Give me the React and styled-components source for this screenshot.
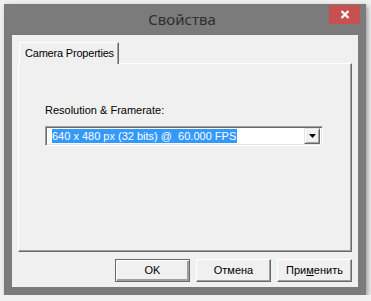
import styled, { createGlobalStyle } from 'styled-components'

const GlobalStyle = createGlobalStyle`
  html, body {
    margin: 0;
    padding: 0;
    background: #f0f0f0;
  }
  body {
    font-family: 'Liberation Sans', Arial, sans-serif;
    font-size: 11px;
    color: #000;
  }
`

const Window = styled('div')`
  width: 362px;
  height: 291px;
  margin: 4px 0 0 4px;
  background: #7b7b7b;
  display: flex;
  flex-direction: column;
  box-shadow: 2px 2px 5px rgba(0, 0, 0, 0.35);
`

const TitleBar = styled('div')`
  height: 31px;
  display: grid;
  grid-template-columns: 1fr auto 1fr;
  align-items: center;
  padding-right: 6px;
`

const Title = styled('div')`
  grid-column: 2;
  font-family: 'Noto Sans', 'Open Sans', sans-serif;
  font-size: 15px;
  color: #2e2e2e;
  margin-top: -1px;
`

const CloseButton = styled('div')`
  grid-column: 3;
  justify-self: end;
  align-self: start;
  margin-top: 1px;
  width: 31px;
  height: 19px;
  background: #c75050;
  display: flex;
  align-items: center;
  justify-content: center;
`

const Client = styled('div')`
  flex: 1;
  margin: 0 8px 8px;
  background: #f0f0f0;
  padding: 7px 6px 5px;
  display: flex;
  flex-direction: column;
`

const TabStrip = styled('div')`
  display: flex;
  padding-left: 1px;
  position: relative;
  z-index: 1;
  margin-bottom: -1px;
`

const Tab = styled('div')`
  width: 100px;
  height: 22px;
  box-sizing: border-box;
  background: #f0f0f0;
  border-top: 1px solid #fff;
  border-left: 1px solid #fff;
  border-right: 1px solid #696969;
  box-shadow: inset -1px 0 #a0a0a0;
  padding: 4px 0 0 5px;
  letter-spacing: -0.2px;
  white-space: nowrap;
`

const Panel = styled('div')`
  height: 189px;
  box-sizing: border-box;
  background: #f0f0f0;
  border-top: 1px solid #fff;
  border-left: 1px solid #fff;
  border-right: 1px solid #696969;
  border-bottom: 1px solid #696969;
  box-shadow: inset -1px -1px #a0a0a0;
  padding: 40px 0 0 26px;
  display: flex;
  flex-direction: column;
  gap: 9px;
`

const Label = styled('div')`
  line-height: 13px;
`

const Combo = styled('div')`
  width: 278px;
  height: 20px;
  box-sizing: border-box;
  background: #fff;
  border-top: 1px solid #a0a0a0;
  border-left: 1px solid #a0a0a0;
  border-right: 1px solid #fff;
  border-bottom: 1px solid #fff;
  box-shadow: inset 1px 1px #696969, inset -1px -1px #e3e3e3;
  padding: 2px 2px 2px 6px;
  display: flex;
  align-items: center;
`

const ComboText = styled('div')`
  flex: 1;
  white-space: pre;
  line-height: 14px;
`

const Selected = styled('span')`
  display: inline-block;
  background: #3399ff;
  color: #fff;
  padding-right: 1px;
`

const DropButton = styled('div')`
  width: 16px;
  height: 16px;
  box-sizing: border-box;
  background: #f0f0f0;
  border-top: 1px solid #e3e3e3;
  border-left: 1px solid #e3e3e3;
  border-right: 1px solid #696969;
  border-bottom: 1px solid #696969;
  box-shadow: inset 1px 1px #fff, inset -1px -1px #a0a0a0;
  display: flex;
  align-items: center;
  justify-content: center;
`

const ButtonRow = styled('div')`
  display: flex;
  justify-content: flex-end;
  gap: 6px;
  margin-top: 7px;
`

const Button = styled('div')`
  width: 75px;
  height: 23px;
  box-sizing: border-box;
  background: #f0f0f0;
  border: 1px solid;
  border-color: ${(p) => (p.$default ? '#696969' : '#fff #696969 #696969 #fff')};
  box-shadow: ${(p) =>
    p.$default
      ? 'inset 1px 1px #fff, inset -1px -1px #a0a0a0, inset -2px -2px #a0a0a0'
      : 'inset -1px -1px #a0a0a0'};
  display: flex;
  align-items: center;
  justify-content: center;
  padding-bottom: 1px;
  color: #000;
`

const App = () => {
  return (
    <>
      <GlobalStyle />
      <Window>
        <TitleBar>
          <Title>Свойства</Title>
          <CloseButton>
            <svg width="10" height="9" viewBox="0 0 10 9">
              <path d="M1.5 1 L8.5 8 M8.5 1 L1.5 8" stroke="#fff" strokeWidth="2.2" />
            </svg>
          </CloseButton>
        </TitleBar>
        <Client>
          <TabStrip>
            <Tab>Camera Properties</Tab>
          </TabStrip>
          <Panel>
            <Label>Resolution &amp; Framerate:</Label>
            <Combo>
              <ComboText>
                <Selected>{'640 x 480 px (32 bits) @  60.000 FPS'}</Selected>
              </ComboText>
              <DropButton>
                <svg width="7" height="4" viewBox="0 0 7 4">
                  <path d="M0 0 H7 L3.5 4 Z" fill="#000" />
                </svg>
              </DropButton>
            </Combo>
          </Panel>
          <ButtonRow>
            <Button $default>OK</Button>
            <Button>Отмена</Button>
            <Button>
              При<u>м</u>енить
            </Button>
          </ButtonRow>
        </Client>
      </Window>
    </>
  )
}

export default App
